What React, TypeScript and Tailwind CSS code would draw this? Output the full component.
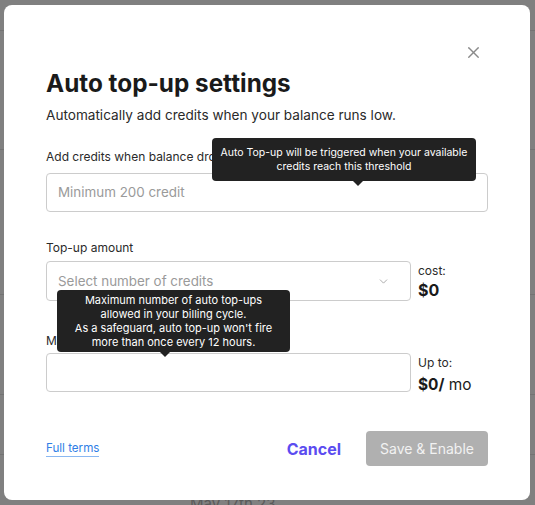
import { X, ChevronDown } from 'lucide-react';

function Tooltip({ lines, className }: { lines: string[]; className: string }) {
  return (
    <div className={`absolute rounded bg-[#222222] text-white leading-[14px] whitespace-nowrap flex flex-col items-center justify-center ${className}`}>
      {lines.map(l => <p key={l}>{l}</p>)}
    </div>
  );
}

function Arrow({ className }: { className: string }) {
  return <div className={`absolute w-0 h-0 border-x-[5px] border-x-transparent border-t-[5px] border-t-[#222222] ${className}`} />;
}

export default function App() {
  return (
    <div className="relative w-[535px] h-[505px] overflow-hidden bg-[#808080] font-['Inter',sans-serif]">
      {/* page behind the dim overlay */}
      <div className="flex flex-col text-[#5a5a5a] text-[13px]">
        <div className="h-[31px] border-b border-[#737373]" />
        <div className="h-[119px] border-b border-[#737373]" />
        <div className="h-[145px] border-b border-[#737373]" />
        <div className="h-[100px] border-b border-[#737373]" />
        <div className="h-[60px] border-b border-[#737373]" />
        <div className="pl-[190px] pt-[38px] text-[15px]">May 17th 23</div>
      </div>

      <div className="absolute left-[4px] top-[5px] w-[526px] h-[495px] rounded-lg bg-white px-[42px] pt-[62px] text-[#1f1f1f]">
        <button className="absolute right-[47px] top-[38px] text-[#8a8a8a]">
          <X size={19} strokeWidth={1.7} />
        </button>

        <h1 className="text-[24.3px] leading-[32px] font-bold text-[#1a1a1a]">Auto top-up settings</h1>
        <p className="mt-[5px] text-[13.6px] leading-[22px] text-[#2a2a2a]">Automatically add credits when your balance runs low.</p>

        <div className="relative">
          <label className="block mt-[22px] text-[12px] leading-[18px] text-[#2a2a2a]">Add credits when balance drops below</label>
          <div className="mt-[7px] h-[39px] rounded border border-[#cccccc] flex items-center px-[11px] text-[13.4px] text-[#9a9a9a]">
            Minimum 200 credit
          </div>
          <Tooltip
            className="left-[166px] top-[-10px] w-[264px] h-[43px] text-[10.5px]"
            lines={['Auto Top-up will be triggered when your available', 'credits reach this threshold']}
          />
          <Arrow className="left-[307px] top-[33px]" />
        </div>

        <label className="block mt-[27px] text-[12px] leading-[18px] text-[#2a2a2a]">Top-up amount</label>
        <div className="relative mt-[4px] flex gap-[7px]">
          <div className="w-[365px] h-[40px] rounded border border-[#cccccc] flex items-center justify-between pl-[11px] pr-[20px] text-[13.4px] text-[#9a9a9a]">
            <span>Select number of credits</span>
            <ChevronDown size={13} strokeWidth={1.5} className="text-[#999999]" />
          </div>
          <div className="pt-[1px]">
            <p className="text-[12px] leading-[18px] text-[#2a2a2a]">cost:</p>
            <p className="text-[16px] leading-[20px] font-bold text-[#1a1a1a]">$0</p>
          </div>
          <Tooltip
            className="left-[11px] top-[29px] w-[233px] h-[62px] text-[11px]"
            lines={[
              'Maximum number of auto top-ups',
              'allowed in your billing cycle.',
              "As a safeguard, auto top-up won't fire",
              'more than once every 12 hours.',
            ]}
          />
          <Arrow className="left-[114px] top-[91px]" />
        </div>

        <label className="block mt-[31px] text-[12px] leading-[18px] text-[#2a2a2a]">Max auto top-ups per month</label>
        <div className="mt-[3px] h-[39px] flex gap-[7px]">
          <div className="w-[365px] h-[39px] rounded border border-[#cccccc]" />
          <div className="pt-[1px]">
            <p className="text-[12px] leading-[18px] text-[#2a2a2a]">Up to:</p>
            <p className="mt-[2px] text-[15.4px] leading-[22px] text-[#1a1a1a]"><span className="font-bold">$0/</span> mo</p>
          </div>
        </div>

        <div className="mt-[39px] flex items-center">
          <a className="text-[11.6px] leading-[16px] text-[#2f7ee6] border-b border-[#8ab8f2]">Full terms</a>
          <button className="ml-auto text-[16px] font-bold text-[#5b4cf0]">Cancel</button>
          <button className="ml-[25px] w-[122px] h-[35px] rounded bg-[#b0b0b0] text-[14px] text-[#f2f2f2]">Save &amp; Enable</button>
        </div>
      </div>
    </div>
  );
}
